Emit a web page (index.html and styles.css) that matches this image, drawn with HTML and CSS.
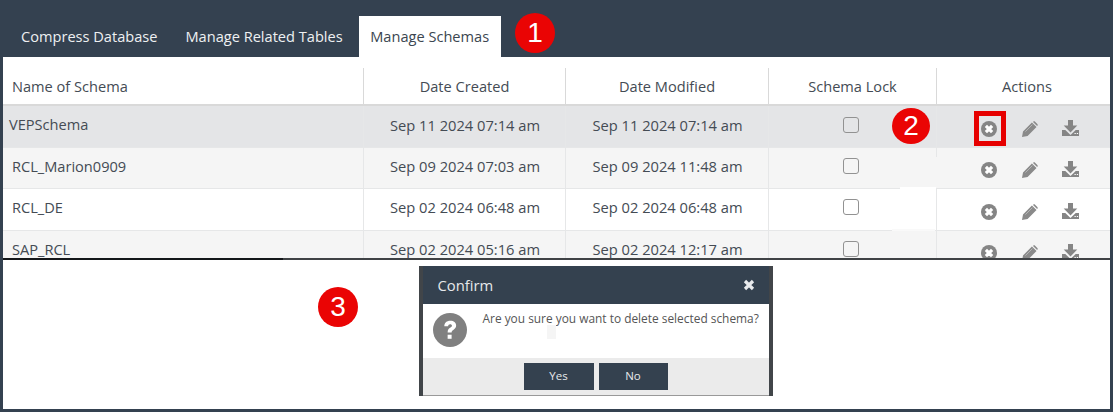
FILE: index.html
```html
<!DOCTYPE html>
<html lang="en">
<head>
<meta charset="utf-8">
<title>Manage Schemas</title>
<link rel="stylesheet" href="styles.css">
</head>
<body>
<svg class="defs" width="0" height="0" aria-hidden="true">
  <symbol id="i-x" viewBox="0 0 16 16"><circle cx="8" cy="8" r="8" fill="#858585"/><path d="M4.900 4.900l6.200 6.200M11.100 4.900l-6.200 6.200" stroke="#fff" stroke-width="3.200" fill="none"/></symbol>
  <symbol id="i-pen" viewBox="0 0 16 16"><path d="M0 16l1-5.600L9.900 1.500l4.600 4.600L5.600 15zM11 .9l.2-.2c.6-.6 1.300-.6 1.900 0l2.200 2.200c.6.6.6 1.300 0 1.900l-.2.200z" fill="#8a8a8a"/><path d="M3.400 10.600l7-7" stroke="#b5b5b5" stroke-width="1"/></symbol>
  <symbol id="i-dl" viewBox="0 0 17 16"><path d="M6 0h5v5.500h4.300L8.500 12.500 1.700 5.500H6z" fill="#858585"/><path d="M0 10h3.300l5.200 5 5.200-5H17v6H0z" fill="#858585"/><path d="M12.500 13.500h1.300M14.800 13.500h1.300" stroke="#fff" stroke-width="1"/></symbol>
</svg>
<main class="frame">
  <nav class="tabs">
    <a class="tab">Compress Database</a>
    <a class="tab">Manage Related Tables</a>
    <a class="tab active">Manage Schemas</a>
  </nav>
  <span class="badge badge-1">1</span>
  <section class="grid-wrap">
    <div class="row head">
      <div class="cell name">Name of Schema</div>
      <div class="cell">Date Created</div>
      <div class="cell">Date Modified</div>
      <div class="cell">Schema Lock</div>
      <div class="cell actions-head">Actions</div>
    </div>
    <div class="row tall selected">
      <div class="cell name first">VEPSchema</div>
      <div class="cell date">Sep 11 2024 07:14 am</div>
      <div class="cell date">Sep 11 2024 07:14 am</div>
      <div class="cell"><span class="check"></span></div>
      <div class="cell acts"><span class="redbox"><svg class="ic"><use href="#i-x"/></svg></span><svg class="ic"><use href="#i-pen"/></svg><svg class="ic dl"><use href="#i-dl"/></svg></div>
    </div>
    <div class="row alt">
      <div class="cell name">RCL_Marion0909</div>
      <div class="cell date">Sep 09 2024 07:03 am</div>
      <div class="cell date">Sep 09 2024 11:48 am</div>
      <div class="cell"><span class="check"></span></div>
      <div class="cell acts"><span class="plain"><svg class="ic"><use href="#i-x"/></svg></span><svg class="ic"><use href="#i-pen"/></svg><svg class="ic dl"><use href="#i-dl"/></svg></div>
    </div>
    <div class="row tall">
      <div class="cell name">RCL_DE</div>
      <div class="cell date">Sep 02 2024 06:48 am</div>
      <div class="cell date">Sep 02 2024 06:48 am</div>
      <div class="cell"><span class="check"></span></div>
      <div class="cell acts"><span class="plain"><svg class="ic"><use href="#i-x"/></svg></span><svg class="ic"><use href="#i-pen"/></svg><svg class="ic dl"><use href="#i-dl"/></svg></div>
    </div>
    <div class="row alt">
      <div class="cell name">SAP_RCL</div>
      <div class="cell date">Sep 02 2024 05:16 am</div>
      <div class="cell date">Sep 02 2024 12:17 am</div>
      <div class="cell"><span class="check"></span></div>
      <div class="cell acts"><span class="plain"><svg class="ic"><use href="#i-x"/></svg></span><svg class="ic"><use href="#i-pen"/></svg><svg class="ic dl"><use href="#i-dl"/></svg></div>
    </div>
    <span class="badge badge-2">2</span>
    <span class="patch patch-a"></span>
    <span class="patch patch-b"></span>
    <span class="patch patch-c"></span>
  </section>
  <div class="rule"></div>
  <section class="lower">
    <span class="badge badge-3">3</span>
    <div class="dialog">
      <header class="dlg-head"><span>Confirm</span><svg class="close" viewBox="0 0 12 12"><path d="M2 2l8 8M10 2l-8 8" stroke="#e8eaec" stroke-width="3.200"/></svg></header>
      <div class="dlg-body">
        <svg class="q" viewBox="0 0 36 36"><circle cx="18" cy="18" r="18" fill="#808080"/><path d="M12 14c0-3.600 2.500-5.800 6.300-5.800 3.700 0 6.200 2.100 6.200 5.100 0 2.300-1.300 3.500-3 4.600-1.300.9-1.800 1.400-1.800 2.800h-4.200c0-2.700.9-3.900 2.600-5 1.300-.9 2-1.400 2-2.300 0-1-.8-1.600-1.900-1.600-1.300 0-2.100.8-2.200 2.200z" fill="#fff"/><rect x="15.500" y="23" width="4.200" height="4.300" fill="#fff"/></svg>
        <p>Are you sure you want to delete selected schema?</p>
        <span class="smudge"></span>
      </div>
      <footer class="dlg-foot"><button class="btn btn-yes">Yes</button><button class="btn btn-no">No</button></footer>
    </div>
  </section>
</main>
</body>
</html>
```
FILE: styles.css
```css
* { box-sizing: border-box; }
html, body { margin: 0; padding: 0; }
body { width: 1113px; height: 412px; overflow: hidden; background: #344150; font-family: "Open Sans", sans-serif; color: #444b54; }
.defs { position: absolute; }
.frame { position: relative; height: 412px; display: flex; flex-direction: column; padding: 0 3px 3px 3px; }
.tabs { display: flex; height: 57px; padding: 16px 0 0 4px; flex: none; }
.tab { height: 41px; padding: 0 14px 2px; display: flex; align-items: center; font-size: 14.600px; color: #eef0f2; }
.tab.active { background: #fff; color: #3b4650; padding: 0 11.500px 2px; margin-left: 2px; }
.badge { position: absolute; width: 40px; height: 40px; border-radius: 50%; background: #ea0404; color: #fff; font-family: "Liberation Sans", sans-serif; font-size: 28px; display: flex; align-items: center; justify-content: center; }
.badge-1 { left: 515px; top: 13px; }
.badge-2 { left: 889px; top: 51px; width: 38px; height: 36px; }
.badge-3 { left: 315px; top: 27px; }
.grid-wrap { position: relative; height: 201px; flex: none; background: #fff; overflow: hidden; }
.row { display: grid; grid-template-columns: 360px 202px 203px 168px 1fr; height: 41px; border-bottom: 1px solid #e6e7e8; font-size: 14.600px; }
.row.tall { height: 42px; }
.cell { display: flex; align-items: center; justify-content: center; border-left: 1px solid #e6e7e8; padding-bottom: 5px; white-space: nowrap; }
.cell:first-child { border-left: 0; }
.cell.date { font-size: 14.700px; padding-left: 1px; }
.cell.name { justify-content: flex-start; padding-left: 9px; }
.head { height: 49px; border-bottom: 2px solid #d9d9d9; padding-top: 11px; }
.head .cell { border-left-color: #d9d9d9; padding-bottom: 0; }
.head .actions-head { padding-left: 7px; }
.selected { background: #e4e5e7; }
.selected .cell { padding-bottom: 3px; }
.selected .cell.first { padding-left: 6px; padding-bottom: 5px; }
.alt { background: #f5f5f5; }
.check { width: 16px; height: 16px; margin-right: 3px; border: 1.500px solid #929292; border-radius: 3px; }
.row .cell.acts { justify-content: flex-start; padding: 4px 0 0 37px; gap: 25px; }
.redbox { width: 32px; height: 35px; padding-right: 2px; border: 5px solid #e60000; display: flex; align-items: center; justify-content: center; margin: -2px -9px -2px 0; }
.plain { width: 16px; height: 16px; display: flex; margin-left: 7px; }
.ic { width: 16px; height: 16px; flex: none; }
.ic.dl { width: 17px; margin: 0 0 2px -1px; }
.patch { position: absolute; }
.patch-a { left: 932px; top: 100px; width: 2px; height: 31px; background: #f5f5f5; }
.patch-b { left: 897px; top: 130px; width: 36px; height: 2px; background: #fff; }
.patch-c { left: 889px; top: 172px; width: 43px; height: 2px; background: #f9f9f9; }
.rule { height: 2px; flex: none; background: linear-gradient(to right, #14171a 280px, #3f4245 280px); }
.lower { position: relative; flex: 1; background: #fff; display: flex; justify-content: center; padding: 6px 0 0 78px; }
.dialog { width: 354px; height: 130px; display: flex; flex-direction: column; border: solid #414549; border-width: 0 4px; background: #fff; }
.dlg-head { height: 38px; flex: none; background: #34414f; color: #e6e8ea; display: flex; align-items: center; justify-content: space-between; font-size: 14.800px; padding: 0 14px 1px 15px; }
.close { width: 12px; height: 12px; }
.dlg-body { position: relative; height: 54px; flex: none; display: flex; padding: 9px 0 0 9px; gap: 15px; }
.q { width: 36px; height: 34px; flex: none; }
.dlg-body p { margin: -3px 0 0; font-size: 11.900px; line-height: 16px; color: #555; white-space: nowrap; }
.smudge { position: absolute; left: 124px; top: 21px; width: 9px; height: 14px; background: #f5f5f5; }
.dlg-foot { flex: 1; background: #ebebeb; border-bottom: 1px solid #999; display: flex; justify-content: center; gap: 5px; padding: 5px 0 0; }
.btn { height: 27px; border: 0; background: #34414f; color: #e8eaec; font: 400 11.500px "Open Sans", sans-serif; padding: 0 0 2px; }
.btn-yes { width: 70px; }
.btn-no { width: 69px; }
```
